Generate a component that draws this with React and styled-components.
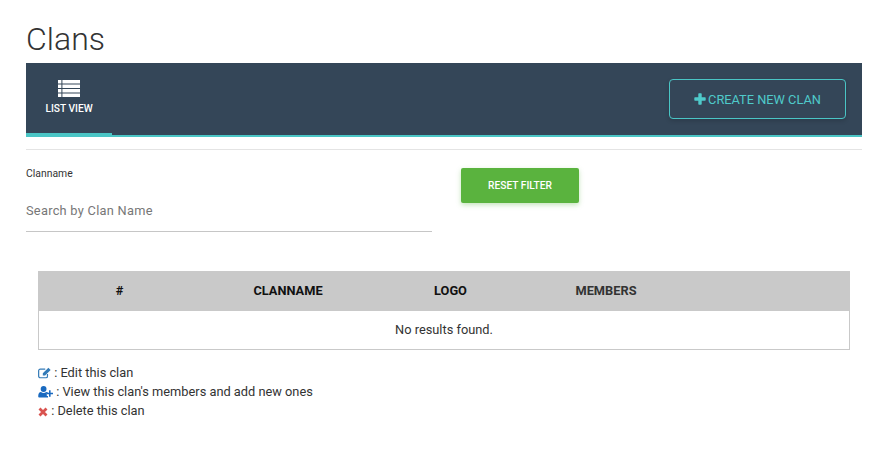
import React from "react";
import styled, { createGlobalStyle } from "styled-components";

const Global = createGlobalStyle`
  html, body { margin: 0; padding: 0; background: #fff; }
  body { font-family: Roboto, "Liberation Sans", sans-serif; color: #333; }
  * { box-sizing: border-box; }
`;
const Page = styled.div`
  width: 877px;
  height: 458px;
  padding: 18px 15px 0 26px;
  overflow: hidden;
`;
const Title = styled.h1`
  margin: 0;
  height: 45px;
  font-size: 32px;
  line-height: 42px;
  font-weight: 300;
  color: #333;
`;
const Bar = styled.div`
  display: flex;
  justify-content: space-between;
  height: 74px;
  background: #344658;
  border-bottom: 2px solid #4ac5c5;
`;
const Tab = styled.div`
  width: 86px;
  height: 74px;
  padding-top: 17px;
  border-bottom: 4px solid #4ac5c5;
  display: flex;
  flex-direction: column;
  align-items: center;
  color: #fff;
  font-size: 10.2px;
  font-weight: 500;
  line-height: 12px;
  svg { display: block; margin-bottom: 6px; }
`;
const CreateButton = styled.button`
  margin: 16px 16px 0 0;
  width: 177px;
  height: 40px;
  background: transparent;
  border: 1px solid #4ac5c5;
  border-radius: 4px;
  color: #4fcaca;
  font-family: inherit;
  font-size: 12.8px;
  display: flex;
  align-items: center;
  justify-content: center;
  gap: 2px;
  padding: 0;
  box-shadow: 0 2px 4px rgba(0,0,0,0.15);
`;
const Divider = styled.div`
  height: 1px;
  background: #e4e4e4;
  margin-top: 12px;
`;
const Filters = styled.div`
  display: flex;
  align-items: flex-start;
  margin-top: 17px;
`;
const Field = styled.div`
  width: 406px;
  height: 65px;
  border-bottom: 1px solid #c6c6c6;
`;
const FieldLabel = styled.div`
  font-size: 10.4px;
  line-height: 13px;
  color: #333;
`;
const Input = styled.div`
  margin-top: 22px;
  font-size: 12.8px;
  line-height: 18px;
  color: #777;
  letter-spacing: 0.27px;
`;
const ResetButton = styled.button`
  margin-left: 29px;
  margin-top: 1px;
  width: 118px;
  height: 35px;
  background: #5ab33e;
  border: none;
  border-radius: 2px;
  color: #fff;
  font-family: inherit;
  font-size: 10.2px;
  font-weight: 500;
  padding: 0;
  box-shadow: 0 2px 5px rgba(90,179,62,0.35);
`;
const Table = styled.div`
  margin: 39px 12px 0 12px;
  width: 812px;
  border: 1px solid #c9c9c9;
`;
const HeadRow = styled.div`
  display: grid;
  grid-template-columns: 161px 176px 149px 162px 1fr;
  height: 39px;
  padding-bottom: 2px;
  align-items: center;
  background: #c9c9c9;
  font-size: 12.8px;
  font-weight: 700;
  color: #111;
  text-align: center;
`;
const Muted = styled.span`
  color: #333;
`;
const Empty = styled.div`
  height: 38px;
  line-height: 37px;
  text-align: center;
  font-size: 12.8px;
  color: #333;
`;
const Legend = styled.div`
  margin: 13px 0 0 12px;
  font-size: 12.8px;
  line-height: 19px;
  color: #333;
`;
const LegendRow = styled.div`
  display: flex;
  align-items: center;
  white-space: pre;
`;

const ListIcon = () => (
  <svg width="22" height="17" viewBox="0 0 22 17" fill="#fff">
    {[0, 4.5, 9, 13.5].map((y) => (
      <g key={y}>
        <rect x="0" y={y} width="3.4" height="3.5" />
        <rect x="4.4" y={y} width="17.6" height="3.5" />
      </g>
    ))}
  </svg>
);
const PlusIcon = () => (
  <svg width="12" height="12" viewBox="0 0 12 12" fill="#4fcaca">
    <path d="M4.3 1a.7.7 0 0 1 .7-.7h2a.7.7 0 0 1 .7.7v3.3H11a.7.7 0 0 1 .7.7v2a.7.7 0 0 1-.7.7H7.7V11a.7.7 0 0 1-.7.7H5a.7.7 0 0 1-.7-.7V7.7H1A.7.7 0 0 1 .3 7V5a.7.7 0 0 1 .7-.7h3.3z" />
  </svg>
);
const EditIcon = () => (
  <svg width="13" height="12" viewBox="0 0 14 12" fill="none">
    <path d="M10.2 7.2v2.2a1.7 1.7 0 0 1-1.7 1.7H2.4A1.7 1.7 0 0 1 .7 9.4V3.6a1.7 1.7 0 0 1 1.7-1.7h5.4" stroke="#337ab7" strokeWidth="1.3" />
    <path d="M11.2.4 13.6 2.8 7.6 8.8H5.2V6.4z" fill="#337ab7" />
  </svg>
);
const UserPlusIcon = () => (
  <svg width="15" height="12" viewBox="0 0 15 12" fill="#1a6ac0">
    <circle cx="5.6" cy="3" r="2.9" />
    <path d="M.2 10.2C.2 7.6 1.4 6 3 6c.7.5 1.6.9 2.6.9S7.5 6.5 8.2 6c.8 0 1.5.4 2 1.1H8.8v2.8h1.2v1.6H1.5C.7 11.5.2 11 .2 10.2z" />
    <path d="M11 4.3h1.600v2.400H15v1.600h-2.400v2.400H11V8.300H8.700V6.700H11z" />
  </svg>
);
const CrossIcon = () => (
  <svg width="10" height="12" viewBox="0 0 10 12" fill="none">
    <path d="M1.500 3.500 8.500 10.500M8.500 3.500 1.500 10.500" stroke="#d9534f" strokeWidth="2.800" />
  </svg>
);

export default function App() {
  return (
    <Page>
      <Global />
      <Title>Clans</Title>
      <Bar>
        <Tab>
          <ListIcon />
          LIST VIEW
        </Tab>
        <CreateButton>
          <PlusIcon />
          CREATE NEW CLAN
        </CreateButton>
      </Bar>
      <Divider />
      <Filters>
        <Field>
          <FieldLabel>Clanname</FieldLabel>
          <Input>Search by Clan Name</Input>
        </Field>
        <ResetButton>RESET FILTER</ResetButton>
      </Filters>
      <Table>
        <HeadRow>
          <span>#</span>
          <span>CLANNAME</span>
          <span>LOGO</span>
          <Muted>MEMBERS</Muted>
          <span />
        </HeadRow>
        <Empty>No results found.</Empty>
      </Table>
      <Legend>
        <LegendRow>
          <EditIcon /> : Edit this clan
        </LegendRow>
        <LegendRow>
          <UserPlusIcon /> : View this clan's members and add new ones
        </LegendRow>
        <LegendRow>
          <CrossIcon /> : Delete this clan
        </LegendRow>
      </Legend>
    </Page>
  );
}
